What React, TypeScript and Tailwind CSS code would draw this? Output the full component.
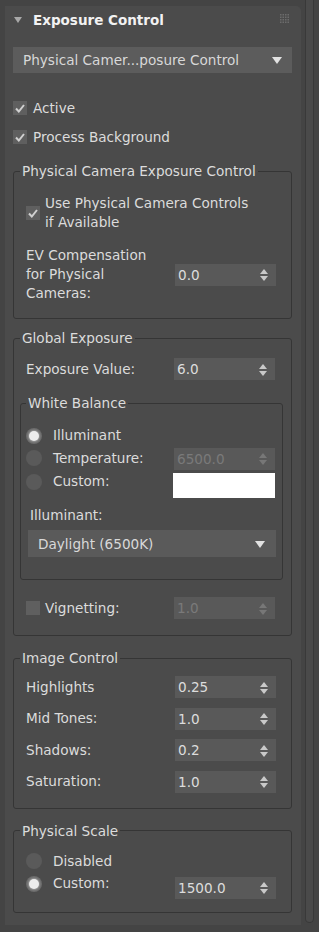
import React from "react";

const font = { fontFamily: '"DejaVu Sans", "Noto Sans", sans-serif' };

function SpinArrows({ disabled = false }: { disabled?: boolean }) {
  const c = disabled ? "#777777" : "#c9c9c9";
  return (
    <svg width="8" height="12" viewBox="0 0 8 12" className="shrink-0">
      <polygon points="4,0 8,5 0,5" fill={c} />
      <polygon points="0,7 8,7 4,12" fill={c} />
    </svg>
  );
}

function Spinner({ value, disabled = false, className = "" }: { value: string; disabled?: boolean; className?: string }) {
  return (
    <div
      className={`flex h-[22px] w-[101px] shrink-0 items-center justify-between bg-[#595959] pl-[3px] pr-[8px] pt-[1px] text-[13.6px] ${
        disabled ? "text-[#7a7a7a]" : "text-[#dcdcdc]"
      } ${className}`}
    >
      <span>{value}</span>
      <SpinArrows disabled={disabled} />
    </div>
  );
}

function CheckBox({ checked = true }: { checked?: boolean }) {
  return (
    <div className="flex h-[14px] w-[14px] shrink-0 items-center justify-center bg-[#5f5f5f]">
      {checked && (
        <svg width="10" height="9" viewBox="0 0 10 9">
          <path d="M1 4.5 L3.8 7.5 L9 1" stroke="#d0d0d0" strokeWidth="2" fill="none" />
        </svg>
      )}
    </div>
  );
}

function Radio({ on = false }: { on?: boolean }) {
  return (
    <div
      className={`flex h-[16px] w-[16px] shrink-0 items-center justify-center rounded-full ${
        on ? "bg-[#6a6a6a]" : "bg-[#5a5a5a]"
      }`}
    >
      {on && <div className="h-[10px] w-[10px] rounded-full bg-[#ececec] shadow-[0_0_2px_1px_rgba(255,255,255,0.35)]" />}
    </div>
  );
}

function DropArrow() {
  return (
    <svg width="10" height="7" viewBox="0 0 10 7">
      <polygon points="0,0 10,0 5,7" fill="#e2e2e2" />
    </svg>
  );
}

function Group({ title, children, legendClass = "ml-[6px]", className = "" }: any) {
  return (
    <fieldset className={`min-w-0 rounded-[3px] border border-[#353535] p-0 ${className}`}>
      <legend className={`px-[2px] text-[13.6px] leading-[18px] text-[#dcdcdc] ${legendClass}`}>{title}</legend>
      {children}
    </fieldset>
  );
}

function Grip() {
  const dots = [];
  for (let r = 0; r < 4; r++) {
    for (let c = 0; c < 4; c++) {
      dots.push(<rect key={`${r}-${c}`} x={c * 2.5} y={r * 2.5} width="1.5" height="1.5" fill="#6c6c6c" />);
    }
  }
  return (
    <svg width="10" height="10" viewBox="0 0 10 10">
      {dots}
    </svg>
  );
}

export default function App() {
  return (
    <div className="flex h-[932px] w-[319px] overflow-hidden bg-[#444444] text-[#dcdcdc]" style={font}>
      {/* Rollout panel */}
      <div className="ml-[5px] mt-[6px] mb-[7px] flex w-[296px] flex-col rounded-tr-[5px] bg-[#4b4b4b] pl-[8px] pr-[9px] pb-[9px]">
        {/* Header */}
        <div className="flex h-[28px] items-center">
          <svg width="8" height="6" viewBox="0 0 8 6" className="ml-[1px] mr-[11px]">
            <polygon points="0,0 8,0 4,6" fill="#a8a8a8" />
          </svg>
          <span className="text-[13.5px] font-bold text-[#f2f2f2]">Exposure Control</span>
          <div className="ml-auto mr-[2px] mt-[-3px]">
            <Grip />
          </div>
        </div>

        {/* Exposure type dropdown */}
        <div className="mt-[13px] flex h-[26px] items-center justify-between bg-[#5c5c5c] pl-[10px] pr-[10px] pt-[1px] text-[13.6px] text-[#d8d8d8]">
          <span>Physical Camer...posure Control</span>
          <DropArrow />
        </div>

        <div className="mt-[24px] flex h-[22px] items-center gap-[6px] text-[13.6px]">
          <CheckBox />
          <span>Active</span>
        </div>
        <div className="mt-[7px] flex h-[22px] items-center gap-[6px] text-[13.6px]">
          <CheckBox />
          <span>Process Background</span>
        </div>

        {/* Physical Camera Exposure Control */}
        <Group title="Physical Camera Exposure Control" className="mt-[14px]">
          <div className="pl-[12px] pr-[15px] pt-[14px] pb-[15px] text-[13.6px]">
            <div className="flex items-center gap-[5px] leading-[19px]">
              <CheckBox />
              <span>
                Use Physical Camera Controls
                <br />
                if Available
              </span>
            </div>
            <div className="mt-[14px] flex items-center justify-between leading-[19px]">
              <span>
                EV Compensation
                <br />
                for Physical
                <br />
                Cameras:
              </span>
              <Spinner value="0.0" />
            </div>
          </div>
        </Group>

        {/* Global Exposure */}
        <Group title="Global Exposure" className="mt-[10px]">
          <div className="pl-[6px] pr-[8px] pt-[11px] pb-[16px] text-[13.6px]">
            <div className="flex h-[22px] items-center justify-between pl-[6px] pr-[8px]">
              <span>Exposure Value:</span>
              <Spinner value="6.0" />
            </div>

            <Group title="White Balance" legendClass="ml-[5px]" className="mt-[14px]">
              <div className="pl-[5px] pr-[7px] pt-[12px] pb-[22px]">
                <div className="flex h-[23px] items-center gap-[11px]">
                  <Radio on />
                  <span>Illuminant</span>
                </div>
                <div className="flex h-[23px] items-center justify-between">
                  <div className="flex items-center gap-[11px]">
                    <Radio />
                    <span>Temperature:</span>
                  </div>
                  <Spinner value="6500.0" disabled />
                </div>
                <div className="flex justify-between">
                  <div className="flex h-[23px] items-center gap-[11px]">
                    <Radio />
                    <span>Custom:</span>
                  </div>
                  <div className="mt-[3px] h-[25px] w-[102px] bg-white" />
                </div>
                <div className="mt-[8px] pl-[4px] leading-[19px]">Illuminant:</div>
                <div className="mt-[5px] ml-[2px] mr-[-1px] flex h-[27px] items-center justify-between bg-[#5a5a5a] pl-[10px] pr-[11px] pt-[1px] text-[#d8d8d8]">
                  <span>Daylight (6500K)</span>
                  <DropArrow />
                </div>
              </div>
            </Group>

            <div className="mt-[17px] flex h-[22px] items-center justify-between pl-[6px] pr-[8px]">
              <div className="flex items-center gap-[5px]">
                <CheckBox checked={false} />
                <span>Vignetting:</span>
              </div>
              <Spinner value="1.0" disabled />
            </div>
          </div>
        </Group>

        {/* Image Control */}
        <Group title="Image Control" className="mt-[13px]">
          <div className="flex flex-col gap-[9.5px] pl-[12px] pr-[15px] pt-[9px] pb-[15px] text-[13.6px]">
            {[
              ["Highlights", "0.25"],
              ["Mid Tones:", "1.0"],
              ["Shadows:", "0.2"],
              ["Saturation:", "1.0"],
            ].map(([label, v]) => (
              <div key={label} className="flex h-[22px] items-center justify-between">
                <span>{label}</span>
                <Spinner value={v} />
              </div>
            ))}
          </div>
        </Group>

        {/* Physical Scale */}
        <Group title="Physical Scale" className="mt-[13px]">
          <div className="pl-[12px] pr-[15px] pt-[10px] pb-[13px] text-[13.6px]">
            <div className="flex h-[23px] items-center gap-[11px]">
              <Radio />
              <span>Disabled</span>
            </div>
            <div className="flex justify-between">
              <div className="flex h-[22px] items-center gap-[11px]">
                <Radio on />
                <span>Custom:</span>
              </div>
              <Spinner value="1500.0" className="mt-[4px]" />
            </div>
          </div>
        </Group>
      </div>

      {/* Scroll bar */}
      <div className="ml-[4px] mb-[9px] w-[9px] rounded-b-full border border-t-0 border-[#393939] bg-[#4a4a4a]" />
    </div>
  );
}
